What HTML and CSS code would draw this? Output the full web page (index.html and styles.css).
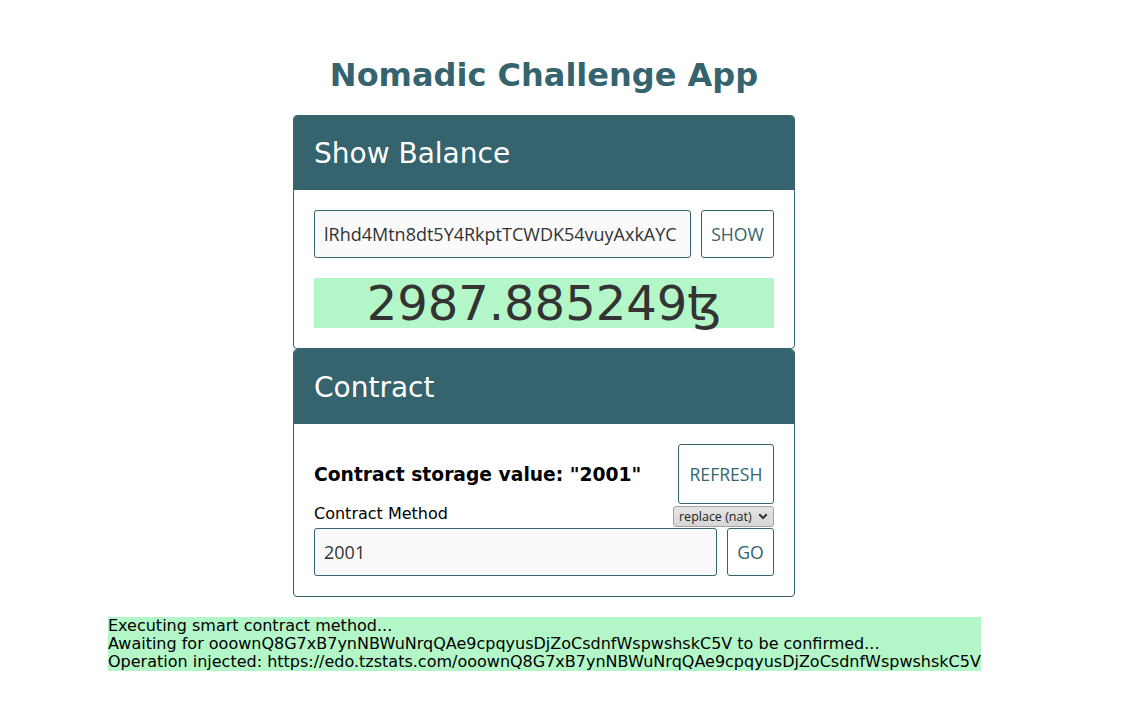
FILE: index.html
```html
<!DOCTYPE html>
<html lang="en">
<head>
<meta charset="utf-8">
<title>Nomadic Challenge App</title>
<link rel="stylesheet" href="styles.css">
</head>
<body>
<div class="page">
  <div class="column">
    <h1 class="title">Nomadic Challenge App</h1>
    <section class="card">
      <div class="card-header">Show Balance</div>
      <div class="card-body">
        <div class="row">
          <input class="field" type="text" value="lRhd4Mtn8dt5Y4RkptTCWDK54vuyAxkAYC">
          <button class="btn btn-show">SHOW</button>
        </div>
        <div class="balance">2987.885249ꜩ</div>
      </div>
    </section>
    <section class="card">
      <div class="card-header">Contract</div>
      <div class="card-body">
        <div class="row storage-row">
          <h3 class="storage">Contract storage value: "2001"</h3>
          <button class="btn btn-refresh">REFRESH</button>
        </div>
        <div class="row method-row">
          <label class="method-label">Contract Method</label>
          <div class="select-wrap">
            <select class="method-select">
              <option>replace (nat)</option>
            </select>
            <svg class="chev" width="10" height="7" viewBox="0 0 10 7"><path d="M1.2 1.2 L5 5 L8.8 1.2" fill="none" stroke="#333" stroke-width="2"/></svg>
          </div>
        </div>
        <div class="row">
          <input class="field" type="text" value="2001">
          <button class="btn btn-go">GO</button>
        </div>
      </div>
    </section>
  </div>
  <div class="log">
    <div>Executing smart contract method...</div>
    <div>Awaiting for ooownQ8G7xB7ynNBWuNrqQAe9cpqyusDjZoCsdnfWspwshskC5V to be confirmed...</div>
    <div>Operation injected: https://edo.tzstats.com/ooownQ8G7xB7ynNBWuNrqQAe9cpqyusDjZoCsdnfWspwshskC5V</div>
  </div>
</div>
</body>
</html>
```

FILE: styles.css
```css
* { box-sizing: border-box; }

body {
  margin: 0;
  background: #ffffff;
  font-family: "DejaVu Sans", sans-serif;
  color: #000;
}

.page {
  padding-top: 57px;
  padding-bottom: 40px;
}

.column {
  width: 502px;
  margin-left: 293px;
}

.title {
  margin: 0 0 21px;
  text-align: center;
  font-size: 32px;
  line-height: 37px;
  font-weight: bold;
  color: #35636e;
}

.card {
  border: 1px solid #35636e;
  border-radius: 4px;
  overflow: hidden;
  background: #fff;
}

.card-header {
  background: #35636e;
  color: #ffffff;
  font-size: 28px;
  line-height: 34px;
  padding: 21px 20px 19px;
}

.card-body {
  padding: 20px;
}

.row {
  display: flex;
  gap: 10px;
}

.field {
  flex: 1;
  min-width: 0;
  height: 48px;
  padding: 0 9px;
  border: 1px solid #35636e;
  border-radius: 3px;
  background: #fafafa;
  font-family: "Open Sans", sans-serif;
  font-size: 18px;
  color: #333;
  outline: none;
}

.btn {
  height: 48px;
  padding: 0;
  border: 1px solid #35636e;
  border-radius: 3px;
  background: #fff;
  color: #35636e;
  font-family: "Open Sans", sans-serif;
  font-size: 17.6px;
}

.btn-show { width: 73px; }
.btn-go { width: 47px; }
.btn-refresh { width: 96px; height: 60px; }

.balance {
  margin-top: 20px;
  height: 50px;
  line-height: 50px;
  background: #b3f7c8;
  color: #333;
  font-size: 48px;
  text-align: center;
}

.storage-row {
  justify-content: space-between;
  align-items: center;
}

.storage {
  margin: 0;
  font-size: 18.72px;
  font-weight: bold;
}

.method-row {
  height: 24px;
  justify-content: space-between;
  align-items: center;
}

.method-label {
  align-self: flex-start;
  font-size: 16px;
  line-height: 19px;
}

.select-wrap {
  position: relative;
  height: 21px;
}

.method-select {
  appearance: none;
  -webkit-appearance: none;
  width: 101px;
  height: 21px;
  padding: 0 18px 0 5px;
  border: 1px solid #a3a3a3;
  border-radius: 3px;
  background: linear-gradient(#e4e4e4, #d6d6d6);
  font-family: "Open Sans", sans-serif;
  font-size: 12.5px;
  color: #222;
}

.chev {
  position: absolute;
  right: 6px;
  top: 7px;
  pointer-events: none;
}

.log {
  width: fit-content;
  margin: 20px 0 0 108px;
  background: #b3f7c8;
  font-size: 16px;
  line-height: 18px;
  color: #000;
}
```
